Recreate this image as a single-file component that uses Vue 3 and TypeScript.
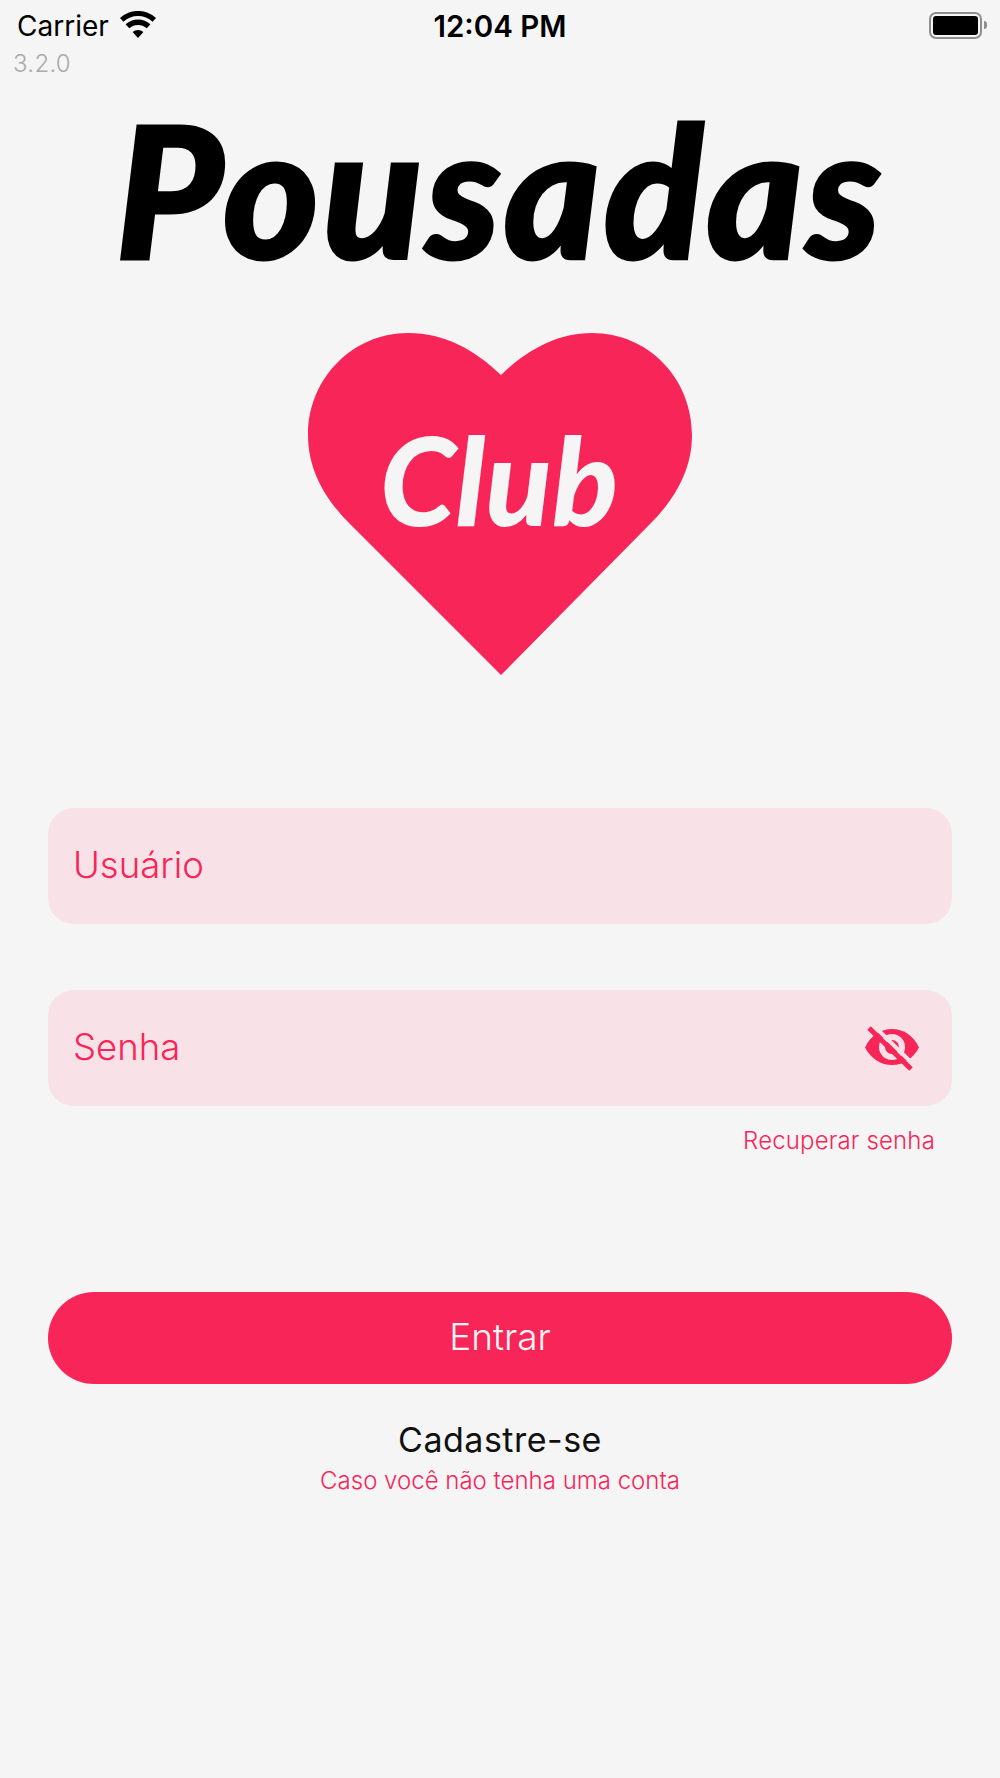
<template>
  <div class="screen">
    <header class="status-bar">
      <div class="status-left">
        <span class="carrier">Carrier</span>
        <svg class="wifi" viewBox="0 0 36 27" aria-hidden="true">
          <path d="M18 27 L12.6 21 A8 8 0 0 1 23.4 21 Z" />
          <path d="M9.2 17.3 L5.6 13.3 A18.5 18.5 0 0 1 30.4 13.3 L26.8 17.3 A13.2 13.2 0 0 0 9.2 17.3 Z" />
          <path d="M3.4 10.8 L0 7 A26.5 26.5 0 0 1 36 7 L32.6 10.8 A21.5 21.5 0 0 0 3.4 10.8 Z" />
        </svg>
      </div>
      <span class="clock">12:04 PM</span>
      <div class="battery">
        <div class="battery-body"><div class="battery-fill"></div></div>
        <div class="battery-cap"></div>
      </div>
    </header>

    <div class="version">3.2.0</div>

    <div class="logo">
      <div class="logo-title">Pousadas</div>
      <div class="logo-heart">
        <svg viewBox="0 0 384 344" width="384" height="344" aria-hidden="true">
          <path
            d="M193 343 L42 192 C17 167 0 138 0 103 C0 46 45 1 100 1 C137 1 167 18 193 43 C219 18 249 1 284 1 C340 1 384 46 384 103 C384 138 367 167 342 192 Z"
          />
        </svg>
        <span class="logo-club">Club</span>
      </div>
    </div>

    <form class="login" @submit.prevent>
      <div class="field">
        <span class="field-label">Usuário</span>
      </div>
      <div class="password">
        <div class="field">
          <span class="field-label">Senha</span>
          <svg class="eye" viewBox="0 0 54 46" aria-hidden="true">
            <path d="M0 22.5 C6 10 16 4 27 4 C38 4 48 10 54 22.5 C48 34 38 40 27 40 C16 40 6 34 0 22.5 Z" />
            <circle class="eye-ring" cx="27" cy="22" r="13" />
            <circle cx="27" cy="22" r="7" />
            <line class="eye-gap" x1="9" y1="1" x2="50" y2="41" />
            <line class="eye-slash" x1="4" y1="3" x2="46" y2="44" />
          </svg>
        </div>
        <a class="recover">Recuperar senha</a>
      </div>
      <button class="submit" type="submit">Entrar</button>
      <div class="signup">
        <div class="signup-title">Cadastre-se</div>
        <div class="signup-hint">Caso você não tenha uma conta</div>
      </div>
    </form>
  </div>
</template>

<script setup lang="ts">
</script>

<style>
html,
body {
  margin: 0;
  background: #f5f5f5;
}
</style>

<style scoped>
.screen {
  height: 1778px;
  overflow: hidden;
  background: #f5f5f5;
  font-family: Inter, "Liberation Sans", sans-serif;
  box-sizing: border-box;
}

.status-bar {
  height: 50px;
  padding: 0 13px;
  display: grid;
  grid-template-columns: 1fr auto 1fr;
  align-items: center;
  color: #000;
}

.status-left {
  padding-left: 4px;
  display: flex;
  align-items: center;
  gap: 11px;
}

.carrier {
  font-size: 28px;
  line-height: 52px;
}

.wifi {
  width: 36px;
  height: 27px;
  margin-top: -3px;
  fill: #000;
}

.clock {
  font-size: 29.5px;
  font-weight: 600;
  line-height: 52px;
}

.battery {
  justify-self: end;
  display: flex;
  align-items: center;
  gap: 2px;
  margin-top: -2px;
}

.battery-body {
  width: 53px;
  height: 27px;
  box-sizing: border-box;
  border: 2px solid #8e8e8e;
  border-radius: 7px;
  padding: 2px;
}

.battery-fill {
  height: 100%;
  background: #000;
  border-radius: 3px;
}

.battery-cap {
  width: 3px;
  height: 8px;
  background: #8e8e8e;
  border-radius: 0 3px 3px 0;
}

.version {
  padding-left: 13px;
  font-size: 24px;
  line-height: 28px;
  font-weight: 300;
  letter-spacing: 0.3px;
  color: #aaa;
}

.logo {
  display: flex;
  flex-direction: column;
  align-items: center;
}

.logo-title {
  margin-top: 22px;
  height: 172px;
  font-family: Lato, sans-serif;
  font-size: 183px;
  line-height: 176px;
  font-weight: 900;
  font-style: italic;
  letter-spacing: 3.5px;
  -webkit-text-stroke: 3px #000;
  color: #000;
}

.logo-heart {
  position: relative;
  margin-top: 60px;
  height: 344px;
  fill: #f82559;
}

.logo-heart svg {
  display: block;
}

.logo-club {
  position: absolute;
  left: 72px;
  top: 88px;
  font-family: Lato, sans-serif;
  font-size: 122px;
  line-height: 118px;
  font-weight: 900;
  font-style: italic;
  color: #f5f5f5;
}

.login {
  margin-top: 132px;
  padding: 0 48px;
  display: flex;
  flex-direction: column;
}

.field {
  height: 116px;
  padding: 0 33px 0 25px;
  display: flex;
  align-items: center;
  justify-content: space-between;
  border-radius: 26px;
  background: #f8e2e8;
}

.field-label {
  font-size: 36.5px;
  line-height: 44px;
  margin-top: -2px;
  font-weight: 300;
  color: #f82559;
}

.eye {
  width: 54px;
  height: 46px;
  fill: #f82559;
}

.eye-ring {
  fill: #f8e2e8;
}

.eye-gap {
  stroke: #f8e2e8;
  stroke-width: 4;
}

.eye-slash {
  stroke: #f82559;
  stroke-width: 5;
}

.password {
  margin-top: 66px;
  display: flex;
  flex-direction: column;
}

.recover {
  align-self: flex-end;
  margin: 21px 17px 0 0;
  font-size: 24px;
  line-height: 28px;
  font-weight: 300;
  letter-spacing: 0.15px;
  color: #f82559;
}

.submit {
  margin-top: 137px;
  padding: 0 0 4px;
  height: 92px;
  border: 0;
  border-radius: 46px;
  background: #f82559;
  color: #f5f5f5;
  font-family: inherit;
  font-size: 37px;
  font-weight: 300;
}

.signup {
  margin-top: 36px;
  text-align: center;
}

.signup-title {
  font-size: 34px;
  line-height: 40px;
  font-weight: 400;
  letter-spacing: 0.5px;
  color: #111;
}

.signup-hint {
  margin-top: 6px;
  font-size: 24px;
  line-height: 30px;
  font-weight: 300;
  color: #f82559;
}
</style>
